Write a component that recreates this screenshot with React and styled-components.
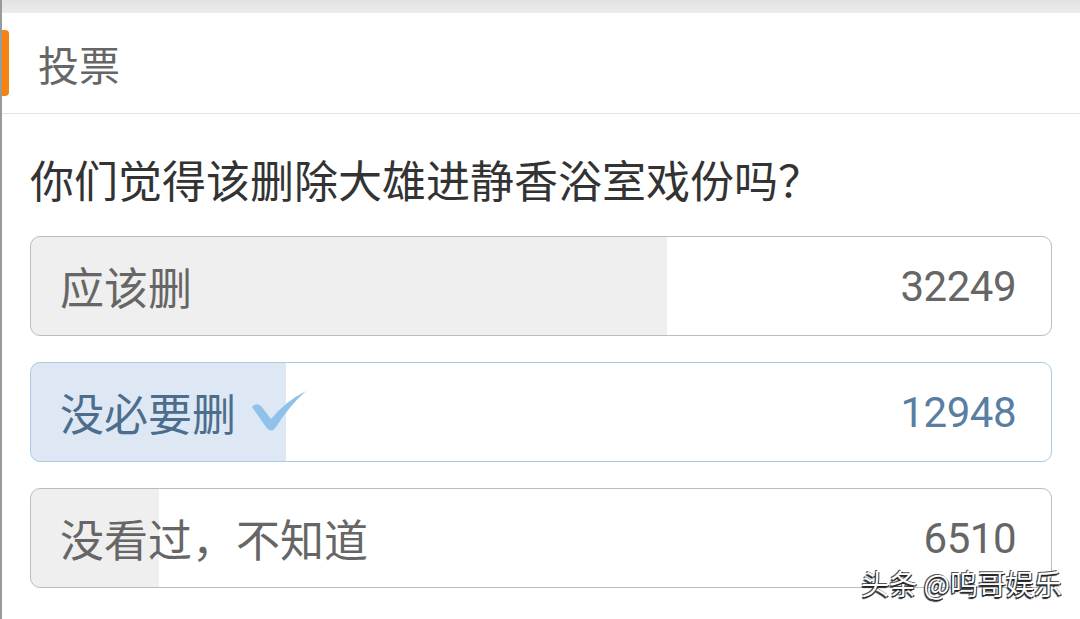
import React from 'react'
import styled, { createGlobalStyle } from 'styled-components'

const GlobalStyle = createGlobalStyle`
  html, body {
    margin: 0;
    padding: 0;
    background: #fff;
  }
  body {
    font-family: "Noto Sans CJK SC", "Noto Sans", sans-serif;
  }
`

const Page = styled.div`
  position: relative;
  width: 1080px;
  height: 619px;
  overflow: hidden;
  background: #fff;
  border-left: 2px solid #9a9a9a;
  box-sizing: border-box;
`

const TopStrip = styled.div`
  height: 13px;
  background: linear-gradient(#e2e2e2, #ececec);
`

const Header = styled.div`
  height: 101px;
  display: flex;
  align-items: center;
  border-bottom: 1px solid #e2e2e2;
  box-sizing: border-box;
  margin-left: -2px;
`

const Accent = styled.div`
  width: 9px;
  height: 66px;
  background: #f5830f;
  border-radius: 0 4px 4px 0;
`

const Title = styled.h1`
  margin: 0 0 0 29px;
  font-size: 41px;
  font-weight: 400;
  color: #666;
  line-height: 1;
`

const Body = styled.div`
  padding: 0 28px 0 28px;
`

const Question = styled.h2`
  margin: 35px 0 0;
  font-size: 44px;
  font-weight: 400;
  line-height: 60px;
  color: #333;
`

const Options = styled.div`
  margin-top: 27px;
  display: flex;
  flex-direction: column;
  gap: 26px;
`

const Option = styled.div`
  height: 100px;
  box-sizing: border-box;
  border: 1.5px solid ${p => (p.$picked ? '#a9cbe2' : '#bdbdbd')};
  border-radius: 10px;
  display: flex;
  align-items: center;
  justify-content: space-between;
  padding: 0 35px 0 29px;
  background: linear-gradient(
    to right,
    ${p => (p.$picked ? '#dde8f4' : '#efefef')} 0,
    ${p => (p.$picked ? '#dde8f4' : '#efefef')} ${p => p.$pct}%,
    #fff ${p => p.$pct}%
  );
  color: ${p => (p.$picked ? '#4d6d8c' : '#666')};
`

const Label = styled.div`
  display: flex;
  align-items: center;
  font-size: 44px;
  line-height: 1;
`

const Count = styled.div`
  font-family: Roboto, "Liberation Sans", sans-serif;
  font-size: 42px;
  letter-spacing: -0.5px;
  color: ${p => (p.$picked ? '#5a7ea2' : '#666')};
`

const Check = styled.svg`
  margin-left: 14px;
  width: 58px;
  height: 46px;
`

const Watermark = styled.div`
  position: absolute;
  right: 18px;
  bottom: 16px;
  font-size: 28px;
  color: #fff;
  text-shadow: -1px 2px 1px #222, 1px 1px 0 #333, -1px -1px 0 #555;
`

const votes = [
  { label: '应该删', count: 32249 },
  { label: '没必要删', count: 12948, picked: true },
  { label: '没看过，不知道', count: 6510 },
]

function CheckMark() {
  return (
    <Check viewBox="0 0 58 46">
      <path
        d="M2 18 Q6 13 11 17 L21 30 Q36 12 56 2 Q40 16 26 38 Q21 45 16 38 Z"
        fill="#8fc1ea"
      />
    </Check>
  )
}

export default function App() {
  const total = votes.reduce((s, v) => s + v.count, 0)
  return (
    <Page>
      <GlobalStyle />
      <TopStrip />
      <Header>
        <Accent />
        <Title>投票</Title>
      </Header>
      <Body>
        <Question>你们觉得该删除大雄进静香浴室戏份吗？</Question>
        <Options>
          {votes.map(v => (
            <Option key={v.label} $picked={v.picked} $pct={((v.count / total) * 100).toFixed(2)}>
              <Label>
                {v.label}
                {v.picked && <CheckMark />}
              </Label>
              <Count $picked={v.picked}>{v.count}</Count>
            </Option>
          ))}
        </Options>
      </Body>
      <Watermark>头条 @鸣哥娱乐</Watermark>
    </Page>
  )
}
